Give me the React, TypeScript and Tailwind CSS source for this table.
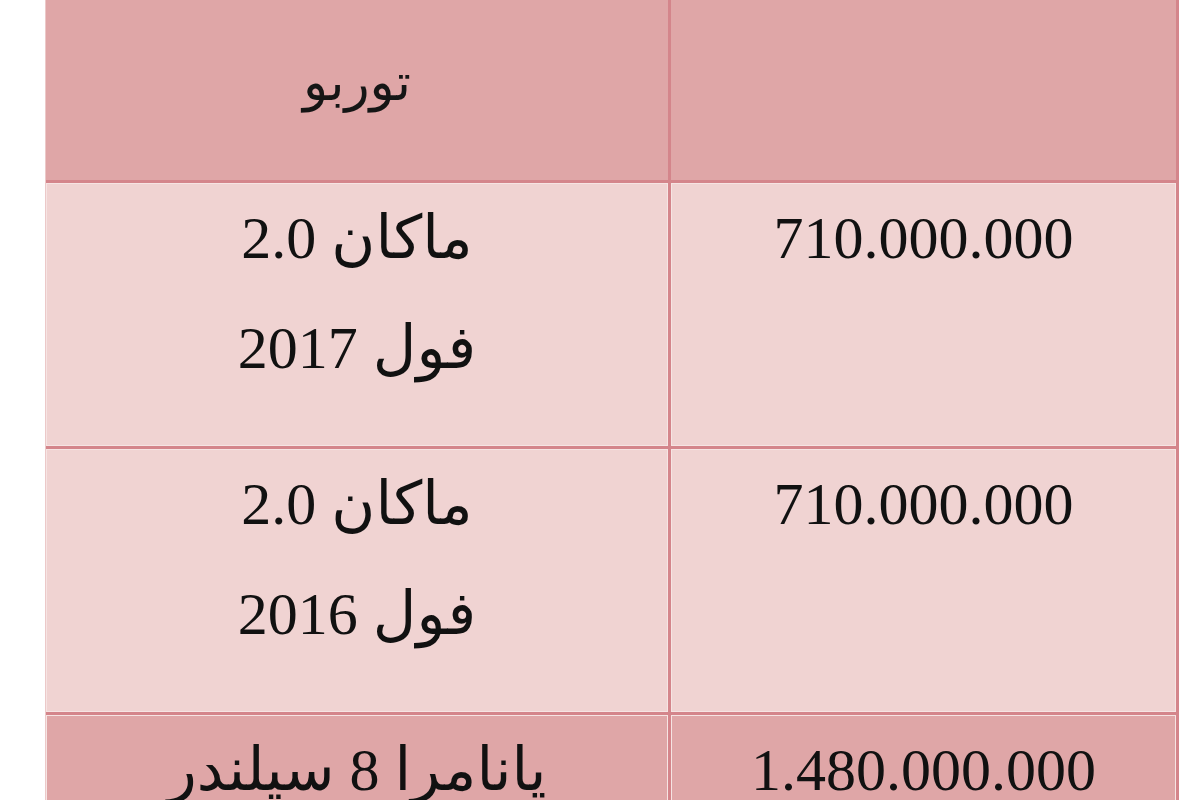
import React from "react";

const serif = "font-['Liberation_Serif','DejaVu_Sans',serif]";

function Row({
  left,
  right,
  dark,
  height,
}: {
  left: string[];
  right: string;
  dark?: boolean;
  height: string;
}) {
  const bg = dark ? "bg-[#dfa6a7]" : "bg-[#f0d3d2]";
  return (
    <div className={`flex ${height} border-b-[3px] border-[#d4858b]`}>
      <div
        className={`w-[625px] shrink-0 ${bg} border-r-[3px] border-[#d4858b] shadow-[inset_-1px_-1px_0_#f6e4e3,inset_1px_1px_0_#f6e4e3] flex flex-col items-center text-[60px] leading-[110px] text-[#111111] ${serif}`}
        dir="rtl"
      >
        {left.map((l, i) => (
          <div key={i}>{l}</div>
        ))}
      </div>
      <div
        className={`flex-1 ${bg} shadow-[inset_-1px_-1px_0_#f6e4e3,inset_1px_1px_0_#f6e4e3] flex flex-col items-center text-[60px] leading-[110px] text-[#111111] ${serif}`}
      >
        <div>{right}</div>
      </div>
    </div>
  );
}

export default function App() {
  return (
    <div className="w-[1200px] h-[800px] bg-white overflow-hidden">
      <div className="ml-[45px] w-[1134px] border-r-[3px] border-l border-l-[#ecc9c9] border-r-[#d4858b]">
        <div className="flex h-[183px] border-b-[3px] border-[#d4858b]">
          <div
            className="w-[625px] shrink-0 bg-[#dfa6a7] border-r-[3px] border-[#d4858b] flex items-center justify-center pb-[16px] text-[52px] text-[#151515] font-['DejaVu_Sans',sans-serif]"
            dir="rtl"
          >
            توربو
          </div>
          <div className="flex-1 bg-[#dfa6a7]" />
        </div>
        <Row left={["ماکان 2.0", "فول 2017"]} right="710.000.000" height="h-[266px]" />
        <Row left={["ماکان 2.0", "فول 2016"]} right="710.000.000" height="h-[266px]" />
        <Row left={["پانامرا 8 سیلندر"]} right="1.480.000.000" dark height="h-[266px]" />
      </div>
    </div>
  );
}
